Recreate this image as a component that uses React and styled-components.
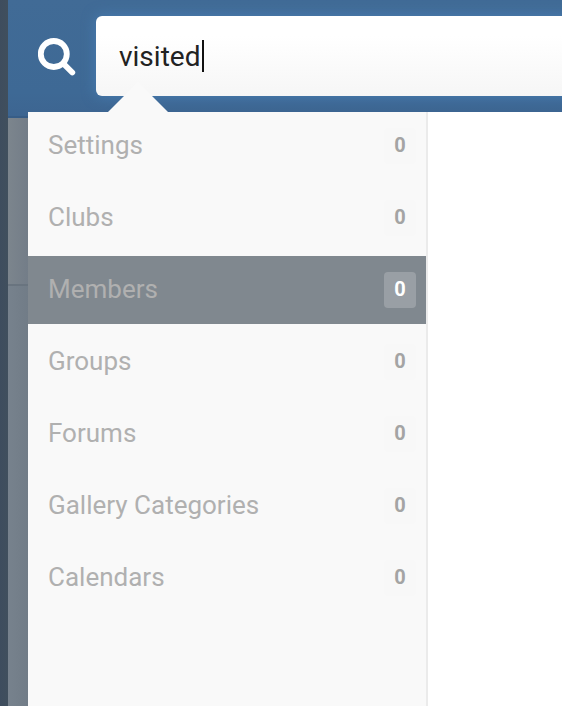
import React, { useState } from "react";
import styled, { createGlobalStyle } from "styled-components";


const GlobalStyle = createGlobalStyle`
    * {
        box-sizing : border-box;
    }
    body {
        margin : 0;
        overflow : hidden;
        font-family : Roboto, "Liberation Sans", sans-serif;
    }
`

const Page = styled.div`
    display : flex;
    width : 100%;
    height : 100vh;
    overflow : hidden;
    background-color : #747f8a;
`

const SideBar = styled.div`
    flex : none;
    width : 8px;
    background : linear-gradient(to right, #3e4d5e, #404f5d);
`

const Main = styled.div`
    flex : 1;
    min-width : 0;
    display : flex;
    flex-direction : column;
`

const Header = styled.div`
    flex : none;
    height : 118px;
    padding : 16px 0 0 30px;
    display : flex;
    align-items : flex-start;
    background : linear-gradient(#416b96, #3e6995 80%, #3d6591);
    border-bottom : 2px solid #375d87;
`

const SearchIcon = styled.svg`
    flex : none;
    width : 38px;
    height : 38px;
    margin-top : 22px;
`

const SearchField = styled.div`
    flex : 1;
    height : 80px;
    margin-left : 20px;
    margin-right : -20px;
    padding-left : 23px;
    display : flex;
    align-items : center;
    border-radius : 6px 0 0 6px;
    background : linear-gradient(#ffffff 25%, #f6f6f6);
    box-shadow : 0 0 14px #487db3;
    color : #222222;
    font-size : 28px;
    white-space : nowrap;
`

const Caret = styled.span`
    width : 2px;
    height : 32px;
    margin-left : 2px;
    background-color : #111111;
`

const Body = styled.div`
    flex : 1;
    min-height : 0;
    display : flex;
`

const Backdrop = styled.div`
    flex : none;
    width : 20px;
    display : flex;
    flex-direction : column;
    background : linear-gradient(to right, #77828d, #717c87);
`

const BackdropTop = styled.div`
    height : 168px;
    border-bottom : 2px solid #69747f;
    background : linear-gradient(to right, #7c858d, #737d88);
`

// the results panel overlaps the bottom of the header
const Results = styled.div`
    position : relative;
    flex : 1;
    margin-top : -6px;
    display : flex;
    background-color : #ffffff;
`

const Arrow = styled.div`
    position : absolute;
    top : -30px;
    left : 80px;
    border : 30px solid transparent;
    border-top : none;
    border-bottom-color : #f9f9f9;
`

const Menu = styled.div`
    width : 400px;
    display : flex;
    flex-direction : column;
    gap : 4px;
    background-color : #f9f9f9;
    border-right : 2px solid #ebebeb;
`

const MenuItem = styled.div`
    height : 68px;
    padding : 0 10px 0 20px;
    display : flex;
    align-items : center;
    justify-content : space-between;
    background-color : ${(props) => (props.$active ? "#80888f" : "transparent")};
    color : #b0b0b0;
    font-size : 26px;
    cursor : pointer;
`

const Name = styled.span`
    padding-bottom : 2px;
`

const Count = styled.span`
    width : 32px;
    height : 36px;
    padding-bottom : 2px;
    display : flex;
    align-items : center;
    justify-content : center;
    border-radius : 4px;
    background-color : ${(props) => (props.$active ? "#999fa5" : "#f8f8f8")};
    color : ${(props) => (props.$active ? "#ffffff" : "#a4a4a4")};
    font-size : 20px;
    font-weight : bold;
`

const sections = [
    { name: "Settings", count: 0 },
    { name: "Clubs", count: 0 },
    { name: "Members", count: 0 },
    { name: "Groups", count: 0 },
    { name: "Forums", count: 0 },
    { name: "Gallery Categories", count: 0 },
    { name: "Calendars", count: 0 },
]

const App = () => {

    const [selected, setSelected] = useState("Members")

    return (
        <Page>
            <GlobalStyle />
            <SideBar />
            <Main>
                <Header>
                    <SearchIcon viewBox="0 0 38 38" fill="none" stroke="#ffffff">
                        <circle cx="15.8" cy="16" r="13" strokeWidth="5.8" />
                        <path d="M25.5 25.7 L34.3 34.5" strokeWidth="5.8" strokeLinecap="round" />
                    </SearchIcon>
                    <SearchField>
                        visited<Caret />
                    </SearchField>
                </Header>
                <Body>
                    <Backdrop>
                        <BackdropTop />
                    </Backdrop>
                    <Results>
                        <Arrow />
                        <Menu>
                            {sections.map((section) => {
                                const active = section.name === selected
                                return <MenuItem key={section.name} $active={active} onClick={() => setSelected(section.name)}>
                                    <Name>{section.name}</Name>
                                    <Count $active={active}>{section.count}</Count>
                                </MenuItem>
                            })}
                        </Menu>
                    </Results>
                </Body>
            </Main>
        </Page>
    )
}

export default App;
